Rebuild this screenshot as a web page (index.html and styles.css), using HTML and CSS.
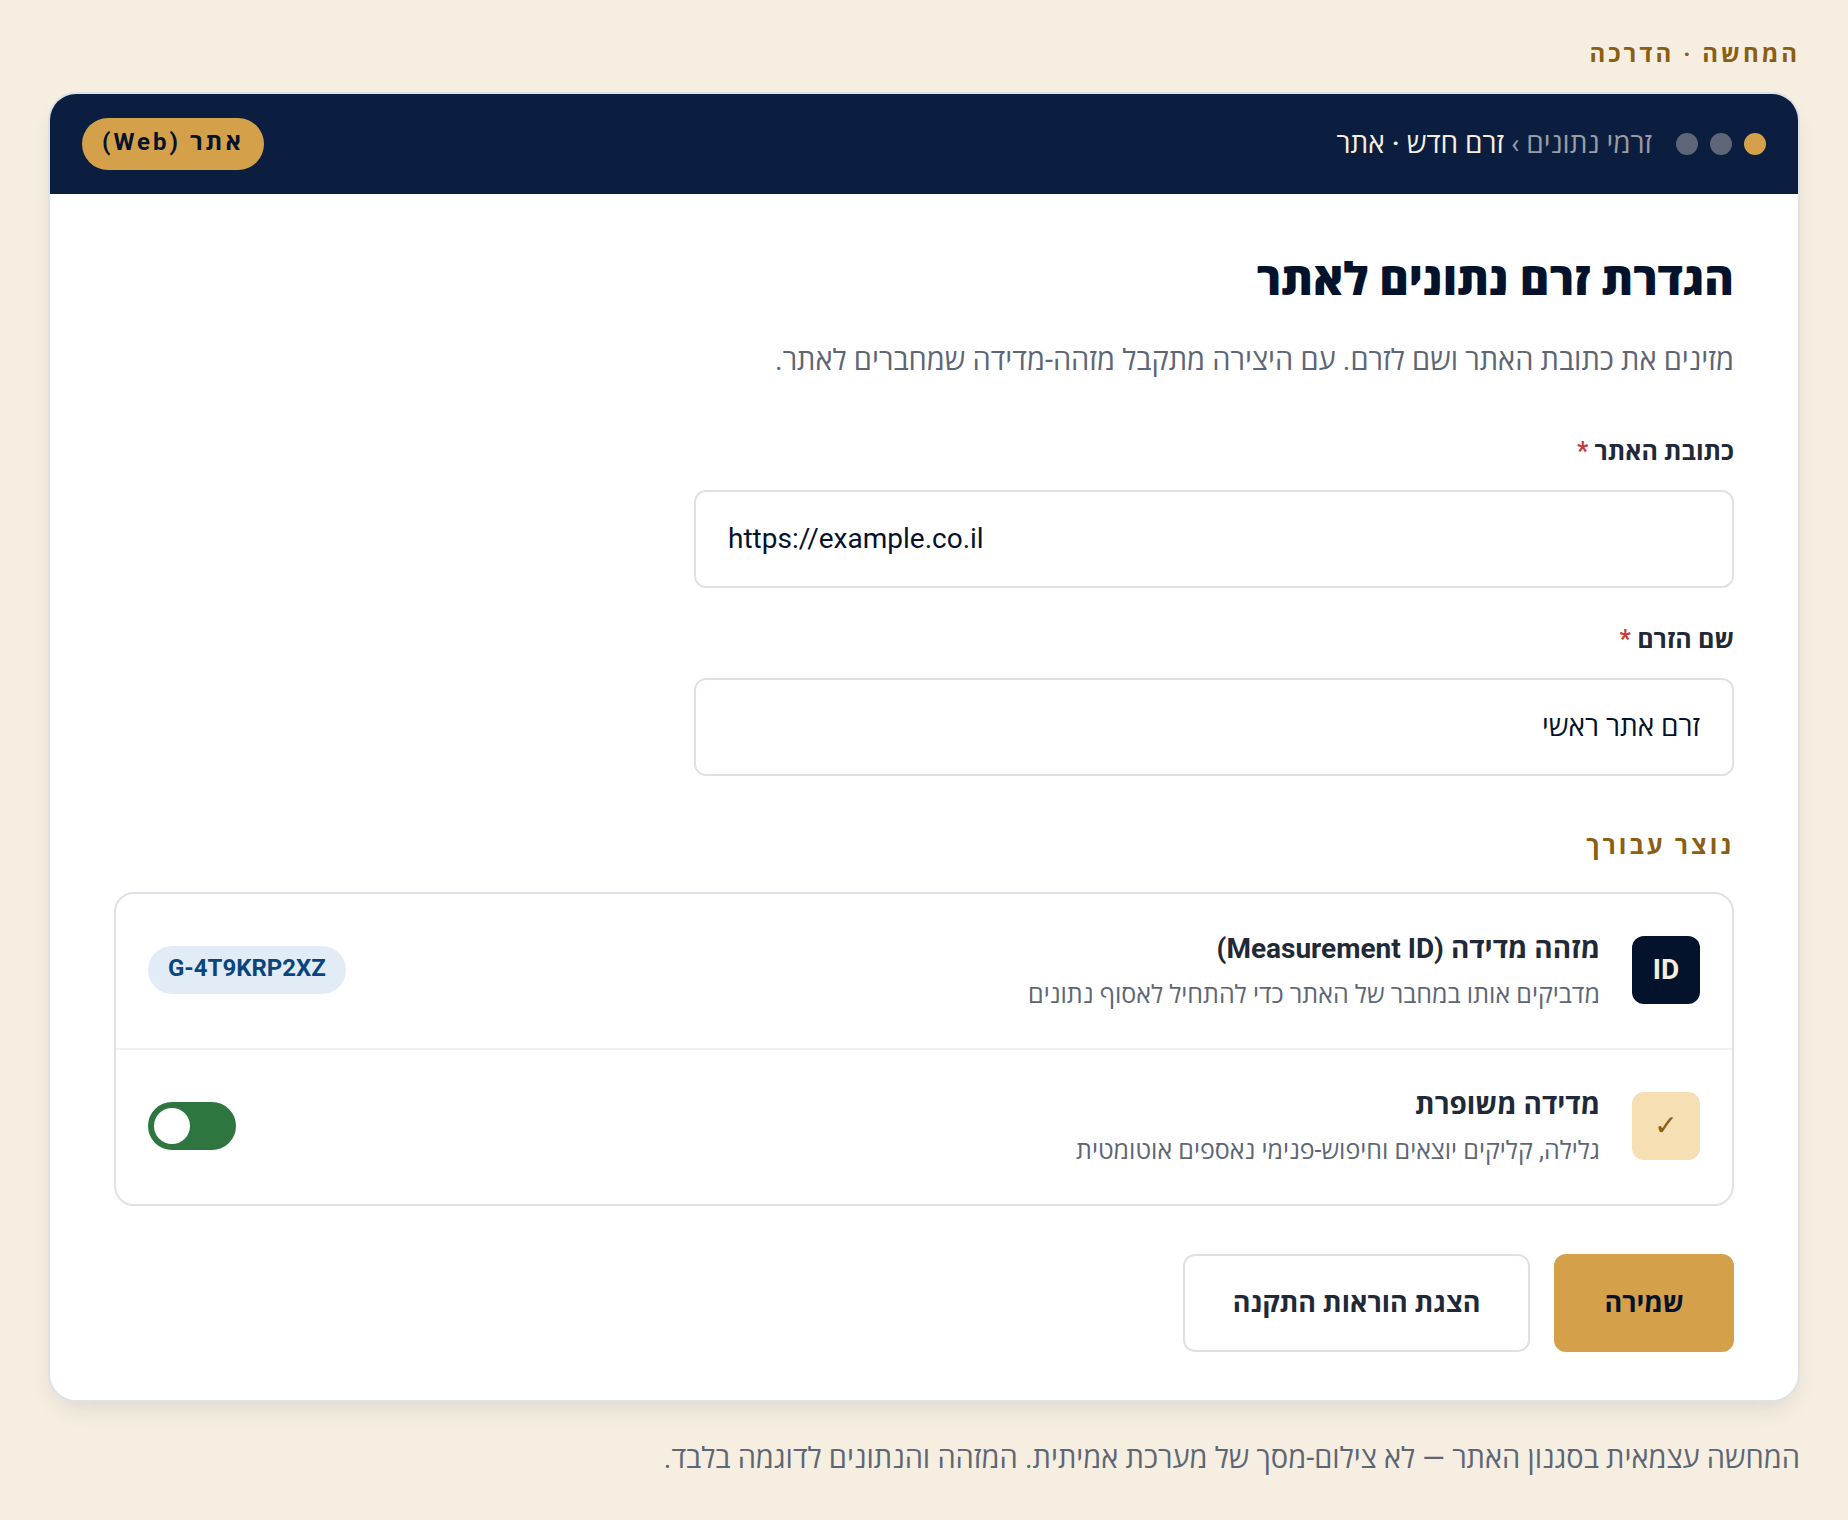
FILE: index.html
```html
<!DOCTYPE html>
<html lang="he" dir="rtl">
<head>
    <meta charset="UTF-8">
    <meta name="viewport" content="width=device-width, initial-scale=1.0">
    <title>הגדרת זרם נתונים לאתר</title>
    <link rel="stylesheet" href="styles.css">
</head>
<body>
    <p class="eyebrow">המחשה · הדרכה</p>

    <main class="card">
        <header class="topbar">
            <div class="dots">
                <span class="dot active"></span>
                <span class="dot"></span>
                <span class="dot"></span>
            </div>
            <nav class="crumbs"><a href="#">זרמי נתונים</a> › <strong>זרם חדש · אתר</strong></nav>
            <span class="badge">אתר (Web)</span>
        </header>

        <form class="content">
            <h1>הגדרת זרם נתונים לאתר</h1>
            <p class="lead">מזינים את כתובת האתר ושם לזרם. עם היצירה מתקבל מזהה-מדידה שמחברים לאתר.</p>

            <div class="field">
                <label for="siteUrl">כתובת האתר <span class="required">*</span></label>
                <input type="text" id="siteUrl" dir="ltr" value="https://example.co.il">
            </div>
            <div class="field">
                <label for="streamName">שם הזרם <span class="required">*</span></label>
                <input type="text" id="streamName" value="זרם אתר ראשי">
            </div>

            <h2>נוצר עבורך</h2>
            <ul class="list">
                <li class="row">
                    <span class="icon icon-dark">ID</span>
                    <div class="row-text">
                        <h3>מזהה מדידה (Measurement ID)</h3>
                        <p>מדביקים אותו במחבר של האתר כדי להתחיל לאסוף נתונים</p>
                    </div>
                    <span class="pill" dir="ltr">G-4T9KRP2XZ</span>
                </li>
                <li class="row">
                    <span class="icon icon-gold">✓</span>
                    <div class="row-text">
                        <h3><label for="enhanced">מדידה משופרת</label></h3>
                        <p>גלילה, קליקים יוצאים וחיפוש-פנימי נאספים אוטומטית</p>
                    </div>
                    <input type="checkbox" class="toggle" id="enhanced" checked>
                </li>
            </ul>

            <div class="actions">
                <button type="button" class="btn btn-primary">שמירה</button>
                <button type="button" class="btn">הצגת הוראות התקנה</button>
            </div>
        </form>
    </main>

    <p class="note">המחשה עצמאית בסגנון האתר — לא צילום-מסך של מערכת אמיתית. המזהה והנתונים לדוגמה בלבד.</p>
</body>
</html>
```
FILE: styles.css
```css
* {
    box-sizing: border-box;
}
body {
    font-family: Roboto, "Open Sans", "DejaVu Sans", sans-serif;
    font-size: 28px;
    line-height: 44px;
    background-color: #f6eee0;
    color: #1f2937;
    margin: 0;
    padding: 34px 48px;
}
h1, h2, h3, p, ul {
    margin: 0;
    padding: 0;
}
.eyebrow {
    margin-bottom: 18px;
    font-size: 24px;
    line-height: 40px;
    font-weight: 700;
    letter-spacing: 3px;
    color: #8b5e14;
}
.card {
    background-color: #fff;
    border: 2px solid #e0e1e6;
    border-radius: 28px;
    overflow: hidden;
    box-shadow: 0 12px 24px -8px rgba(10, 30, 62, 0.12);
}
.topbar {
    display: flex;
    align-items: center;
    gap: 24px;
    padding: 24px 32px;
    background-color: #0b1e3f;
}
.dots {
    display: flex;
    gap: 12px;
}
.dot {
    width: 22px;
    height: 22px;
    border-radius: 50%;
    background-color: #5f6678;
}
.dot.active {
    background-color: #d4a04a;
}
.crumbs {
    color: #9a9ca3;
}
.crumbs a {
    color: inherit;
    text-decoration: none;
}
.crumbs strong {
    font-weight: 500;
    color: #f6eee0;
}
.badge {
    margin-right: auto;
    padding: 4px 20px 8px;
    border-radius: 26px;
    background-color: #d4a04a;
    color: #04122b;
    font-size: 24px;
    line-height: 40px;
    font-weight: 700;
    letter-spacing: 3px;
}
.content {
    padding: 56px 64px 48px;
}
h1 {
    margin-bottom: 28px;
    font-size: 45px;
    line-height: 60px;
    font-weight: 800;
    color: #04122b;
}
.lead {
    margin-bottom: 52px;
    font-size: 29px;
    color: #5d6675;
}
.field {
    max-width: 1040px;
    margin-bottom: 34px;
}
.field label {
    display: block;
    margin-bottom: 20px;
    font-size: 25px;
    line-height: 36px;
    font-weight: 700;
}
.required {
    color: #c93a3a;
}
.field input {
    display: block;
    width: 100%;
    padding: 25px 32px;
    border: 2px solid #e0e1e6;
    border-radius: 12px;
    background-color: #fff;
    color: #04122b;
    font: inherit;
}
h2 {
    margin: 52px 0 28px;
    font-size: 25px;
    line-height: 36px;
    font-weight: 700;
    letter-spacing: 3px;
    color: #8b5e14;
}
.list {
    list-style: none;
    border: 2px solid #e0e1e6;
    border-radius: 20px;
}
.row {
    display: flex;
    align-items: center;
    gap: 32px;
    padding: 31px 32px 33px;
}
.row + .row {
    border-top: 2px solid #f0f0f2;
}
.icon {
    display: flex;
    align-items: center;
    justify-content: center;
    width: 68px;
    height: 68px;
    border-radius: 12px;
    font-weight: 700;
}
.icon-dark {
    background-color: #04122b;
    color: #f6eee0;
}
.icon-gold {
    background-color: #f5dfb3;
    color: #8b5e14;
}
.row-text {
    flex: 1;
}
.row-text h3 {
    margin-bottom: 2px;
    font-size: 28px;
    line-height: 48px;
    font-weight: 700;
}
.row-text p {
    font-size: 25px;
    line-height: 40px;
    color: #5d6675;
}
.pill {
    padding: 2px 20px 6px;
    border-radius: 24px;
    background-color: #e2ecf7;
    color: #0b4580;
    font-size: 24px;
    line-height: 40px;
    font-weight: 700;
}
.toggle {
    appearance: none;
    display: flex;
    align-items: center;
    justify-content: flex-start;
    width: 88px;
    height: 48px;
    margin: 0;
    padding: 6px;
    border-radius: 24px;
    background-color: #9a9ca3;
}
.toggle::before {
    content: "";
    width: 36px;
    height: 36px;
    border-radius: 50%;
    background-color: #fff;
}
.toggle:checked {
    justify-content: flex-end;
    background-color: #2f7540;
}
.actions {
    display: flex;
    gap: 24px;
    margin-top: 48px;
}
.btn {
    padding: 25px 48px;
    border: 2px solid #e0e1e6;
    border-radius: 12px;
    background-color: #fff;
    color: #1f2937;
    font: inherit;
    font-size: 27px;
    font-weight: 700;
}
.btn-primary {
    border-color: #d4a04a;
    background-color: #d4a04a;
    color: #04122b;
}
.note {
    margin-top: 34px;
    font-size: 29px;
    color: #5d6675;
}
```
